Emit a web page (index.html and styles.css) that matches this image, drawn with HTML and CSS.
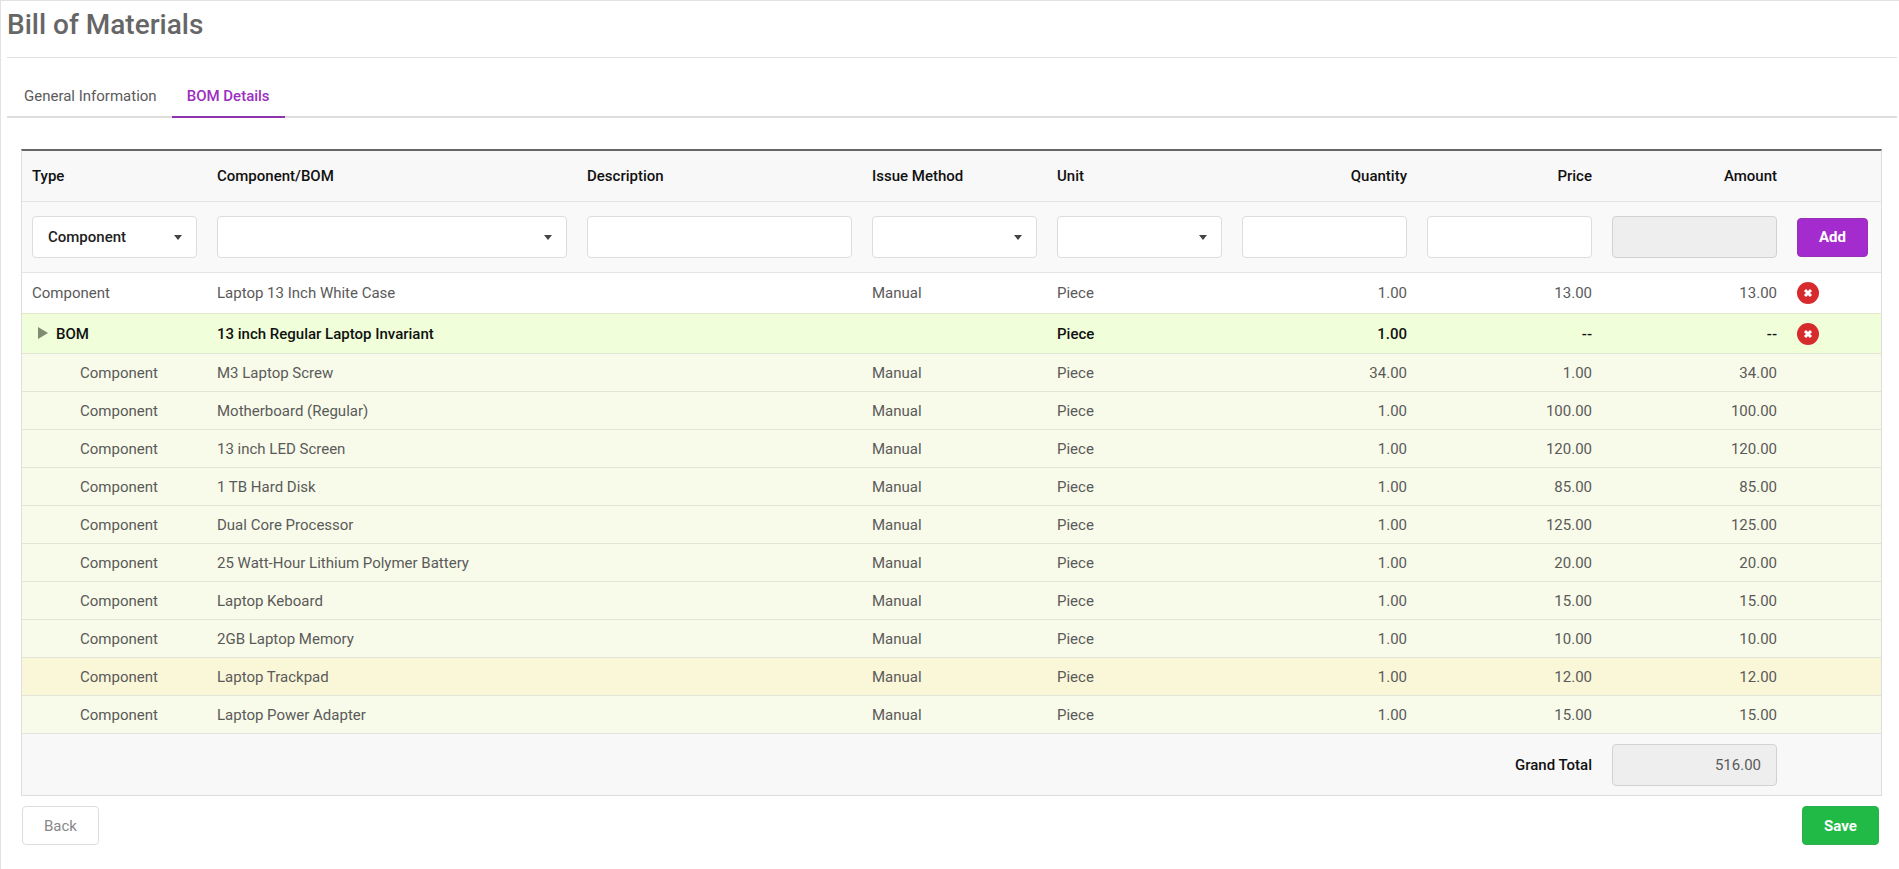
FILE: index.html
```html
<!DOCTYPE html>
<html lang="en">
<head>
  <meta charset="utf-8">
  <title>Bill of Materials</title>
  <link rel="stylesheet" href="styles.css">
</head>
<body>
  <div class="page">
    <h1>Bill of Materials</h1>

    <nav class="tabs">
      <a href="#general">General Information</a>
      <a href="#details" class="active">BOM Details</a>
    </nav>

    <form class="bom-form" id="bomForm">
      <div class="table-box">
        <table class="bom-table">
          <colgroup>
            <col class="col-std">
            <col class="col-name">
            <col class="col-desc">
            <col class="col-std">
            <col class="col-std">
            <col class="col-std">
            <col class="col-std">
            <col class="col-std">
            <col class="col-action">
          </colgroup>
          <thead>
            <tr class="head-row">
              <th><label for="type">Type</label></th>
              <th><label for="component">Component/BOM</label></th>
              <th><label for="description">Description</label></th>
              <th><label for="issueMethod">Issue Method</label></th>
              <th><label for="unit">Unit</label></th>
              <th class="num"><label for="quantity">Quantity</label></th>
              <th class="num"><label for="price">Price</label></th>
              <th class="num"><label for="amount">Amount</label></th>
              <th></th>
            </tr>
            <tr class="input-row">
              <td>
                <select id="type">
                  <option>Component</option>
                  <option>BOM</option>
                </select>
              </td>
              <td><select id="component"><option></option></select></td>
              <td><input type="text" id="description"></td>
              <td><select id="issueMethod"><option></option></select></td>
              <td><select id="unit"><option></option></select></td>
              <td><input type="text" id="quantity" class="num"></td>
              <td><input type="text" id="price" class="num"></td>
              <td><input type="text" id="amount" class="num" disabled></td>
              <td><button type="button" class="btn btn-add">Add</button></td>
            </tr>
          </thead>
          <tbody>
            <tr class="item">
              <td>Component</td>
              <td>Laptop 13 Inch White Case</td>
              <td></td>
              <td>Manual</td>
              <td>Piece</td>
              <td class="num">1.00</td>
              <td class="num">13.00</td>
              <td class="num">13.00</td>
              <td>
                <button type="button" class="remove" aria-label="Remove">
                  <svg viewBox="0 0 22 22"><path d="M8 8l6 6M14 8l-6 6"/></svg>
                </button>
              </td>
            </tr>
            <tr class="bom">
              <td>
                <button type="button" class="toggle" aria-label="Toggle">
                  <svg viewBox="0 0 10 12"><path d="M0 0l10 6-10 6z"/></svg>
                </button>BOM
              </td>
              <td>13 inch Regular Laptop Invariant</td>
              <td></td>
              <td></td>
              <td>Piece</td>
              <td class="num">1.00</td>
              <td class="num">--</td>
              <td class="num">--</td>
              <td>
                <button type="button" class="remove" aria-label="Remove">
                  <svg viewBox="0 0 22 22"><path d="M8 8l6 6M14 8l-6 6"/></svg>
                </button>
              </td>
            </tr>
            <tr class="child">
              <td>Component</td>
              <td>M3 Laptop Screw</td>
              <td></td>
              <td>Manual</td>
              <td>Piece</td>
              <td class="num">34.00</td>
              <td class="num">1.00</td>
              <td class="num">34.00</td>
              <td></td>
            </tr>
            <tr class="child">
              <td>Component</td>
              <td>Motherboard (Regular)</td>
              <td></td>
              <td>Manual</td>
              <td>Piece</td>
              <td class="num">1.00</td>
              <td class="num">100.00</td>
              <td class="num">100.00</td>
              <td></td>
            </tr>
            <tr class="child">
              <td>Component</td>
              <td>13 inch LED Screen</td>
              <td></td>
              <td>Manual</td>
              <td>Piece</td>
              <td class="num">1.00</td>
              <td class="num">120.00</td>
              <td class="num">120.00</td>
              <td></td>
            </tr>
            <tr class="child">
              <td>Component</td>
              <td>1 TB Hard Disk</td>
              <td></td>
              <td>Manual</td>
              <td>Piece</td>
              <td class="num">1.00</td>
              <td class="num">85.00</td>
              <td class="num">85.00</td>
              <td></td>
            </tr>
            <tr class="child">
              <td>Component</td>
              <td>Dual Core Processor</td>
              <td></td>
              <td>Manual</td>
              <td>Piece</td>
              <td class="num">1.00</td>
              <td class="num">125.00</td>
              <td class="num">125.00</td>
              <td></td>
            </tr>
            <tr class="child">
              <td>Component</td>
              <td>25 Watt-Hour Lithium Polymer Battery</td>
              <td></td>
              <td>Manual</td>
              <td>Piece</td>
              <td class="num">1.00</td>
              <td class="num">20.00</td>
              <td class="num">20.00</td>
              <td></td>
            </tr>
            <tr class="child">
              <td>Component</td>
              <td>Laptop Keboard</td>
              <td></td>
              <td>Manual</td>
              <td>Piece</td>
              <td class="num">1.00</td>
              <td class="num">15.00</td>
              <td class="num">15.00</td>
              <td></td>
            </tr>
            <tr class="child">
              <td>Component</td>
              <td>2GB Laptop Memory</td>
              <td></td>
              <td>Manual</td>
              <td>Piece</td>
              <td class="num">1.00</td>
              <td class="num">10.00</td>
              <td class="num">10.00</td>
              <td></td>
            </tr>
            <tr class="child selected">
              <td>Component</td>
              <td>Laptop Trackpad</td>
              <td></td>
              <td>Manual</td>
              <td>Piece</td>
              <td class="num">1.00</td>
              <td class="num">12.00</td>
              <td class="num">12.00</td>
              <td></td>
            </tr>
            <tr class="child">
              <td>Component</td>
              <td>Laptop Power Adapter</td>
              <td></td>
              <td>Manual</td>
              <td>Piece</td>
              <td class="num">1.00</td>
              <td class="num">15.00</td>
              <td class="num">15.00</td>
              <td></td>
            </tr>
          </tbody>
          <tfoot>
            <tr class="total-row">
              <td colspan="7" class="num"><label for="grandTotal">Grand Total</label></td>
              <td><input type="text" id="grandTotal" class="num" value="516.00" disabled></td>
              <td></td>
            </tr>
          </tfoot>
        </table>
      </div>

      <div class="actions">
        <button type="button" class="btn btn-back">Back</button>
        <button type="submit" class="btn btn-save">Save</button>
      </div>
    </form>
  </div>
</body>
</html>
```
FILE: styles.css
```css
* {
  box-sizing: border-box;
}

body {
  margin: 0;
  background-color: #fff;
  color: #5a5a5a;
  font-family: Roboto, "Noto Sans", sans-serif;
  font-size: 15px;
  line-height: 20px;
}

.page {
  min-height: 100vh;
  padding: 0 2px 24px 6px;
  border: 1px solid #e2e2e2;
  border-right: none;
}

h1 {
  margin: 0;
  padding: 6px 0 14px;
  border-bottom: 1px solid #e0e0e0;
  color: #666;
  font-size: 28px;
  font-weight: 500;
  line-height: 36px;
}

.tabs {
  display: flex;
  margin-top: 17px;
  padding-left: 2px;
  border-bottom: 2px solid #ddd;
}

.tabs a {
  margin-bottom: -2px;
  padding: 11px 15px 10px;
  border-bottom: 2px solid transparent;
  color: #5a5a5a;
  text-decoration: none;
}

.tabs a.active {
  border-bottom-color: #8e35ae;
  color: #9b2fc0;
  font-weight: 500;
}

.bom-form {
  margin: 31px 15px 0 14px;
}

.table-box {
  border: 1px solid #ddd;
  border-top: 2px solid #666;
}

.bom-table {
  width: 100%;
  table-layout: fixed;
  border-spacing: 0;
}

.col-std {
  width: 185px;
}

.col-name {
  width: 370px;
}

.col-desc {
  width: 285px;
}

.col-action {
  width: 94px;
}

.bom-table th,
.bom-table td {
  height: 38px;
  padding: 0 10px;
  border-top: 1px solid #e4e4e4;
  text-align: left;
  white-space: nowrap;
}

.bom-table .num {
  text-align: right;
}

.bom-table .head-row th {
  height: 50px;
  border-top: none;
  background-color: #f8f8f8;
  color: #111;
  font-weight: 500;
}

.bom-table .input-row td {
  height: 71px;
  background-color: #f9f9f9;
}

.bom-table .item td {
  height: 41px;
}

.bom-table .bom td {
  height: 40px;
  border-top-color: #e2e6cc;
  background-color: #f0ffd9;
  color: #111;
  font-weight: 500;
}

.bom-table .child td {
  border-top-color: #e2e5d8;
  background-color: #f8fbe9;
}

.bom-table .child td:first-child {
  padding-left: 58px;
}

.bom-table .child.selected td {
  background-color: #faf7d9;
}

.bom-table .total-row td {
  height: 62px;
  background-color: #f8f8f8;
  color: #111;
  font-weight: 500;
}

input,
select {
  display: block;
  width: 100%;
  height: 42px;
  padding: 0 15px;
  border: 1px solid #ddd;
  border-radius: 4px;
  background-color: #fff;
  color: #222;
  font-family: inherit;
  font-size: 15px;
}

select {
  appearance: none;
  background-image: url("data:image/svg+xml,%3Csvg xmlns='http://www.w3.org/2000/svg' width='8' height='5'%3E%3Cpath d='M0 0h8L4 5z' fill='%23444'/%3E%3C/svg%3E");
  background-repeat: no-repeat;
  background-position: right 14px center;
  font-weight: 500;
}

input:disabled {
  border-color: #d2d2d2;
  background-color: #eee;
  color: #5a5a5a;
}

.btn {
  height: 39px;
  padding: 0 20px;
  border: 1px solid transparent;
  border-radius: 4px;
  color: #fff;
  font-family: inherit;
  font-size: 15px;
  font-weight: 700;
}

.btn-add {
  width: 71px;
  border-color: #9832b5;
  background-color: #a42bce;
}

.btn-back {
  border-color: #ddd;
  background-color: #fff;
  color: #888;
  font-weight: 400;
}

.btn-save {
  border-color: #2fae50;
  background-color: #22ba46;
}

.toggle {
  padding: 0;
  margin: 0 8px 0 6px;
  border: none;
  background: none;
}

.toggle svg {
  display: block;
  width: 10px;
  height: 12px;
  fill: #7f8c74;
}

.remove {
  display: block;
  width: 22px;
  height: 22px;
  padding: 0;
  border: none;
  border-radius: 50%;
  background-color: #d62a2d;
}

.remove svg {
  display: block;
  fill: none;
  stroke: #fff;
  stroke-width: 3;
}

.actions {
  display: flex;
  justify-content: space-between;
  padding: 10px 3px 0 1px;
}

.actions .btn {
  width: 77px;
}
```
